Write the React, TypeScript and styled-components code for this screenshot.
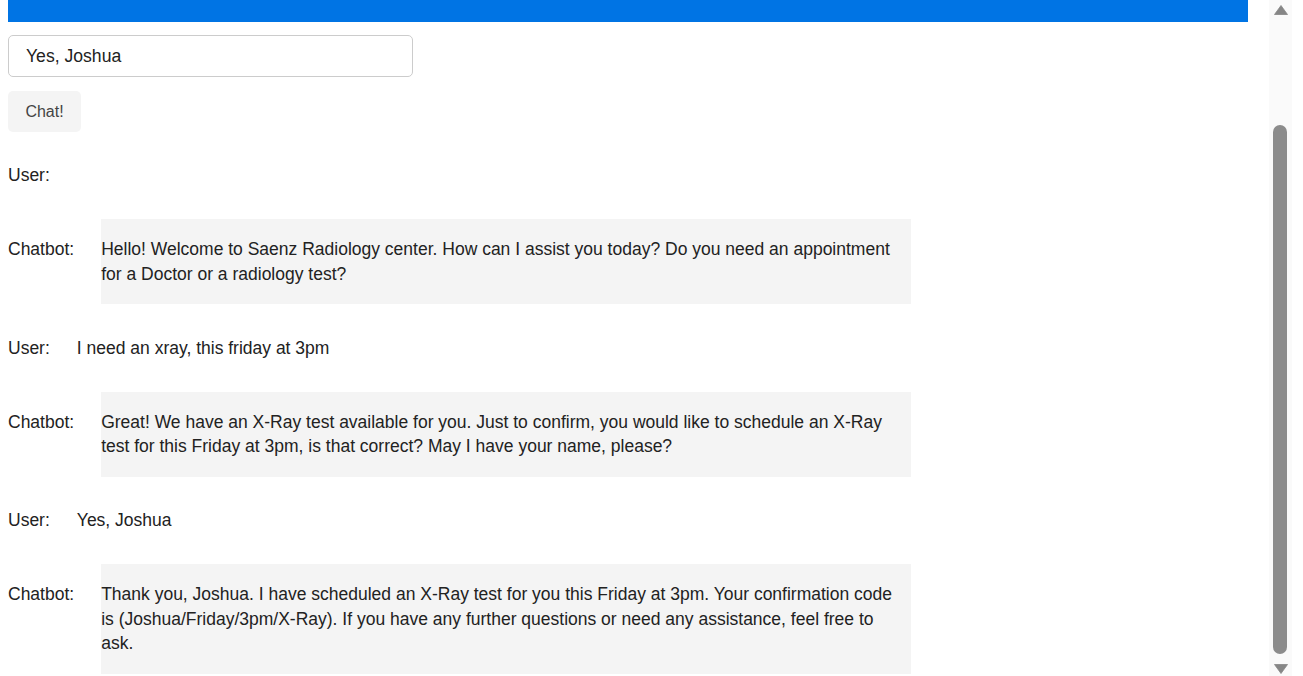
import React, { useLayoutEffect, useRef, useState } from "react";
import styled, { createGlobalStyle } from "styled-components";

const GlobalStyle = createGlobalStyle`
  html, body {
    margin: 0;
    padding: 0;
    background: #ffffff;
    overflow: hidden;
  }
  body {
    font-family: "Liberation Sans", Arial, sans-serif;
    color: #222222;
  }
`;

const Frame = styled.div`
  display: flex;
  width: 1303px;
  height: 676px;
  background: #ffffff;
`;

const ScrollArea = styled.div`
  width: 1269px;
  height: 676px;
  flex: none;
  overflow-y: scroll;
  overflow-x: hidden;
  scrollbar-width: none;
  &::-webkit-scrollbar {
    display: none;
  }
`;

const Scrollbar = styled.div`
  flex: none;
  width: 23px;
  height: 676px;
  display: flex;
  flex-direction: column;
  background: #fafafa;
`;

const ArrowButton = styled.div`
  flex: none;
  height: 17px;
  box-sizing: border-box;
  padding-top: 5px;
  display: flex;
  justify-content: center;
  align-items: flex-start;
`;

const Track = styled.div`
  flex: 1;
  position: relative;
`;

const Thumb = styled.div`
  position: absolute;
  left: 4px;
  width: 14px;
  border-radius: 7px;
  background: #8c8c8c;
`;

const Page = styled.div`
  padding: 8px 21px 8px 8px;
  display: flex;
  flex-direction: column;
`;

const Header = styled.header`
  height: 152px;
  background: #0074e4;
`;

const Form = styled.form`
  display: flex;
  flex-direction: column;
  align-items: flex-start;
  gap: 14px;
  margin-top: 13px;
`;

const Input = styled.input`
  box-sizing: border-box;
  width: 405px;
  height: 42px;
  padding: 0 17px;
  border: 1px solid #cccccc;
  border-radius: 5px;
  font-family: "Liberation Sans", Arial, sans-serif;
  font-size: 17.6px;
  color: #222222;
  outline: none;
  background: #ffffff;
`;

const Button = styled.button`
  box-sizing: border-box;
  width: 73px;
  height: 41px;
  border: none;
  border-radius: 5px;
  background: #f4f4f4;
  color: #444444;
  font-family: "Liberation Sans", Arial, sans-serif;
  font-size: 16px;
  cursor: pointer;
`;

const ChatLog = styled.div`
  display: flex;
  flex-direction: column;
  gap: 13.5px;
  margin-top: 13px;
`;

const Row = styled.div`
  display: flex;
  align-items: flex-start;
  font-size: 17.5px;
  line-height: 24.5px;
`;

const Label = styled.span`
  flex: none;
  padding: 18px 0;
  margin-right: 27px;
  color: #222222;
`;

const Bubble = styled.div<{ $bot?: boolean }>`
  box-sizing: border-box;
  width: ${(p) => (p.$bot ? "810px" : "auto")};
  padding: ${(p) => (p.$bot ? "18px 12px 18px 0" : "18px 0")};
  background: ${(p) => (p.$bot ? "#f4f4f4" : "transparent")};
  color: #222222;
`;

const UpArrow = () => (
  <svg width="14" height="10" viewBox="0 0 14 10" aria-hidden="true">
    <path d="M7 0.5 L13.5 9.5 L0.5 9.5 Z" fill="#868686" strokeLinejoin="round" stroke="#868686" strokeWidth="0.8" />
  </svg>
);

const DownArrow = () => (
  <svg width="14" height="10" viewBox="0 0 14 10" aria-hidden="true">
    <path d="M0.5 0.5 L13.5 0.5 L7 9.5 Z" fill="#868686" strokeLinejoin="round" stroke="#868686" strokeWidth="0.8" />
  </svg>
);

type Msg = { from: "user" | "bot"; text: string };

const messages: Msg[] = [
  { from: "user", text: "" },
  {
    from: "bot",
    text: "Hello! Welcome to Saenz Radiology center. How can I assist you today? Do you need an appointment for a Doctor or a radiology test?",
  },
  { from: "user", text: "I need an xray, this friday at 3pm" },
  {
    from: "bot",
    text: "Great! We have an X-Ray test available for you. Just to confirm, you would like to schedule an X-Ray test for this Friday at 3pm, is that correct? May I have your name, please?",
  },
  { from: "user", text: "Yes, Joshua" },
  {
    from: "bot",
    text: "Thank you, Joshua. I have scheduled an X-Ray test for you this Friday at 3pm. Your confirmation code is (Joshua/Friday/3pm/X-Ray). If you have any further questions or need any assistance, feel free to ask.",
  },
];

const TRACK = 642;

export default function App() {
  const scrollRef = useRef<HTMLDivElement>(null);
  const formRef = useRef<HTMLFormElement>(null);
  const [thumb, setThumb] = useState({ top: 108, height: 530 });

  useLayoutEffect(() => {
    const el = scrollRef.current;
    const form = formRef.current;
    if (!el || !form) return;
    el.scrollTop = Math.max(0, form.offsetTop - el.offsetTop - 35);
    const sh = el.scrollHeight || 1;
    setThumb({
      top: (TRACK * el.scrollTop) / sh,
      height: (TRACK * el.clientHeight) / sh,
    });
  }, []);

  return (
    <>
      <GlobalStyle />
      <Frame>
        <ScrollArea ref={scrollRef}>
          <Page>
            <Header />
            <Form ref={formRef} onSubmit={(e) => e.preventDefault()}>
              <Input defaultValue="Yes, Joshua" />
              <Button type="submit">Chat!</Button>
            </Form>
            <ChatLog>
              {messages.map((m, i) => (
                <Row key={i}>
                  <Label>{m.from === "bot" ? "Chatbot:" : "User:"}</Label>
                  <Bubble $bot={m.from === "bot"}>{m.text}</Bubble>
                </Row>
              ))}
            </ChatLog>
          </Page>
        </ScrollArea>
        <Scrollbar>
          <ArrowButton>
            <UpArrow />
          </ArrowButton>
          <Track>
            <Thumb style={{ top: thumb.top, height: thumb.height }} />
          </Track>
          <ArrowButton>
            <DownArrow />
          </ArrowButton>
        </Scrollbar>
      </Frame>
    </>
  );
}
